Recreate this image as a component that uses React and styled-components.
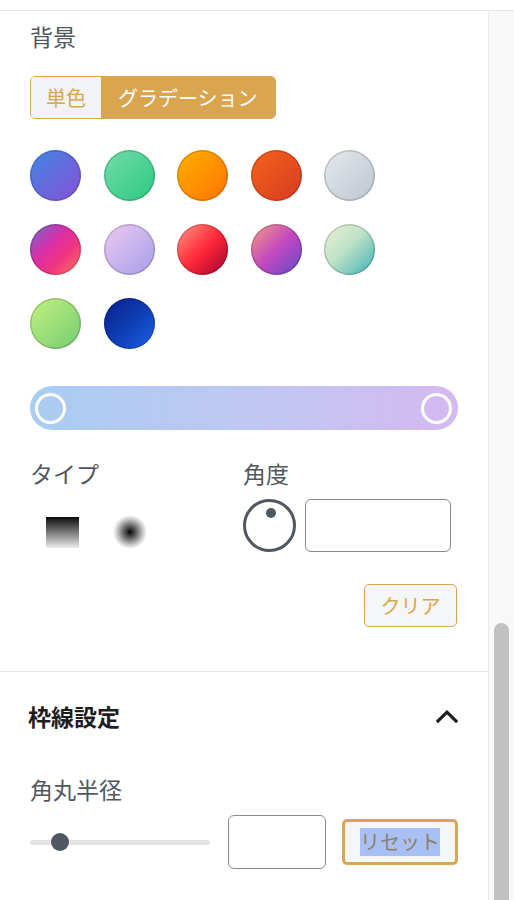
import React from "react";
import styled, { createGlobalStyle } from "styled-components";

const GOLD = "#d9a54f";
const LABEL = "#50575e";
const FONT = `"Noto Sans CJK JP", "Noto Sans", sans-serif`;

const Global = createGlobalStyle`
  html, body { margin: 0; padding: 0; background: #fff; }
  body { font-family: ${FONT}; }
  * { box-sizing: border-box; }
`;

const Page = styled.div`
  width: 514px;
  height: 900px;
  overflow: hidden;
  display: flex;
  flex-direction: column;
`;

const TopSpace = styled.div`
  height: 11px;
  flex: none;
  border-bottom: 1.5px solid #e4e5e7;
`;

const Body = styled.div`
  flex: 1;
  display: flex;
  min-height: 0;
`;

const Panel = styled.div`
  flex: 1;
  display: flex;
  flex-direction: column;
`;

const Gutter = styled.div`
  width: 27px;
  flex: none;
  background: #f8f8f8;
  border-left: 1px solid #e9e9e9;
  padding-top: 612px;
  padding-left: 5px;
`;

const Thumb = styled.div`
  width: 15px;
  height: 400px;
  border-radius: 8px;
  background: #c1c1c1;
`;

const Section = styled.div`
  padding: ${(p) => p.$pad || "0 30px"};
  display: flex;
  flex-direction: column;
  border-bottom: ${(p) => (p.$divider ? "1.5px solid #e4e5e7" : "none")};
`;

const Label = styled.div`
  font-size: 23px;
  line-height: 32px;
  color: ${LABEL};
  margin-top: ${(p) => p.$mt || 0}px;
`;

const Toggle = styled.div`
  margin-top: 24px;
  display: inline-flex;
  align-self: flex-start;
  height: 43px;
  border: 1.5px solid ${GOLD};
  border-radius: 5px;
  overflow: hidden;
`;

const Seg = styled.div`
  display: flex;
  align-items: center;
  padding: 0 ${(p) => p.$px}px;
  font-size: 20px;
  background: ${(p) => (p.$active ? GOLD : "#f2f3f5")};
  color: ${(p) => (p.$active ? "#fff" : GOLD)};
`;

const Swatches = styled.div`
  margin-top: 31px;
  display: grid;
  grid-template-columns: repeat(5, 51px);
  column-gap: 22.5px;
  row-gap: 23px;
`;

const Swatch = styled.div`
  width: 51px;
  height: 51px;
  border-radius: 50%;
  background: ${(p) => p.$bg};
  box-shadow: inset 0 0 0 1.5px rgba(0, 0, 0, 0.16);
`;

const GradBar = styled.div`
  margin-top: 37px;
  height: 44px;
  border-radius: 22px;
  background: linear-gradient(90deg, #a9ccf3 0%, #bfc8f1 50%, #d5b9f2 100%);
  display: flex;
  align-items: center;
  justify-content: space-between;
  padding: 0 6px 0 5px;
`;

const Handle = styled.div`
  width: 31px;
  height: 31px;
  border-radius: 50%;
  border: 3px solid #fff;
`;

const Columns = styled.div`
  margin-top: 27px;
  display: grid;
  grid-template-columns: 213px 1fr;
`;

const Col = styled.div`
  display: flex;
  flex-direction: column;
`;

const Row = styled.div`
  display: flex;
  align-items: center;
  gap: ${(p) => p.$gap || 0}px;
  margin-top: ${(p) => p.$mt || 0}px;
  padding-top: ${(p) => p.$pt || 0}px;
  padding-left: ${(p) => p.$pl || 0}px;
  height: ${(p) => (p.$h ? p.$h + "px" : "auto")};
`;

const LinearIcon = styled.div`
  width: 33px;
  height: 31px;
  background: linear-gradient(180deg, #0a0a0a 0%, #5a5a5a 35%, #a8a8a8 70%, #ececec 100%);
`;

const RadialIcon = styled.div`
  width: 34px;
  height: 34px;
  border-radius: 50%;
  background: radial-gradient(circle closest-side, #000 0%, #333 18%, #777 45%, #bdbdbd 72%, rgba(255,255,255,0) 100%);
`;

const Dial = styled.div`
  width: 53px;
  height: 53px;
  border-radius: 50%;
  border: 3px solid ${LABEL};
  display: flex;
  justify-content: center;
  padding-top: 6px;
  padding-left: 2px;
  flex: none;
`;

const Dot = styled.div`
  width: 10px;
  height: 10px;
  border-radius: 50%;
  background: ${LABEL};
`;

const Input = styled.div`
  width: ${(p) => p.$w}px;
  height: ${(p) => p.$h}px;
  border: 1.5px solid #868a8f;
  border-radius: 6px;
  background: #fff;
  flex: none;
`;

const ButtonRow = styled.div`
  display: flex;
  justify-content: flex-end;
  margin-top: 32px;
  margin-bottom: 44px;
  padding-right: 1px;
`;

const GoldButton = styled.div`
  height: ${(p) => p.$h}px;
  width: ${(p) => p.$w}px;
  display: flex;
  align-items: center;
  justify-content: center;
  font-size: 20px;
  color: ${GOLD};
  background: #f5f6f8;
  border: ${(p) => (p.$focus ? "3px" : "1.5px")} solid ${GOLD};
  border-radius: 5px;
  flex: none;
`;

const Selected = styled.span`
  background: #a9c0f4;
  color: #8e7e69;
  line-height: 28px;
`;

const Header = styled.div`
  display: flex;
  align-items: center;
  justify-content: space-between;
  margin-top: 28px;
`;

const Title = styled.div`
  font-size: 23px;
  line-height: 32px;
  font-weight: 700;
  color: #1e1e1e;
  margin-left: -2px;
`;

const Track = styled.div`
  width: 180px;
  height: 5px;
  border-radius: 3px;
  background: #e3e3e5;
  display: flex;
  align-items: center;
  padding-left: 21px;
  flex: none;
`;

const SliderThumb = styled.div`
  width: 18px;
  height: 18px;
  border-radius: 50%;
  background: ${LABEL};
  flex: none;
`;

const swatches = [
  "linear-gradient(135deg, #3f86e6 0%, #8a50d6 100%)",
  "linear-gradient(135deg, #72dca8 0%, #2ec882 100%)",
  "linear-gradient(135deg, #ffb000 0%, #ff7400 100%)",
  "linear-gradient(135deg, #f5621a 0%, #d63c24 100%)",
  "linear-gradient(135deg, #e6e9ee 0%, #bcc5cf 100%)",
  "linear-gradient(135deg, #6a6ed0 0%, #d92ea8 40%, #f0357e 65%, #ff7a5c 100%)",
  "linear-gradient(135deg, #ecc8f0 0%, #c9b4ee 50%, #a59ee6 100%)",
  "linear-gradient(135deg, #ff9a86 0%, #ff2a3a 50%, #a3002e 100%)",
  "linear-gradient(135deg, #f0a080 0%, #c448c0 50%, #5e4ac8 100%)",
  "linear-gradient(135deg, #eaf0d0 0%, #bfe3c8 45%, #3cb0b4 100%)",
  "linear-gradient(135deg, #c2f27e 0%, #74cc72 100%)",
  "linear-gradient(135deg, #0a1f88 0%, #0f3fb8 55%, #1e64ec 100%)",
];

function Chevron() {
  return (
    <svg width="22" height="14" viewBox="0 0 22 14" fill="none">
      <path d="M2 12 L11 3.2 L20 12" stroke="#1e1e1e" strokeWidth="3.2" strokeLinecap="square" />
    </svg>
  );
}

export default function App() {
  return (
    <Page>
      <Global />
      <TopSpace />
      <Body>
        <Panel>
          <Section $divider $pad="0 30px 0 30px">
            <Label $mt={9}>背景</Label>
            <Toggle>
              <Seg $px={15}>単色</Seg>
              <Seg $px={17} $active>グラデーション</Seg>
            </Toggle>
            <Swatches>
              {swatches.map((bg, i) => (
                <Swatch key={i} $bg={bg} />
              ))}
            </Swatches>
            <GradBar>
              <Handle />
              <Handle />
            </GradBar>
            <Columns>
              <Col>
                <Label>タイプ</Label>
                <Row $mt={10} $h={53} $pt={13} $pl={16} $gap={34}>
                  <LinearIcon />
                  <RadialIcon />
                </Row>
              </Col>
              <Col>
                <Label>角度</Label>
                <Row $mt={10} $gap={9}>
                  <Dial>
                    <Dot />
                  </Dial>
                  <Input $w={146} $h={53} />
                </Row>
              </Col>
            </Columns>
            <ButtonRow>
              <GoldButton $w={93} $h={43}>クリア</GoldButton>
            </ButtonRow>
          </Section>
          <Section>
            <Header>
              <Title>枠線設定</Title>
              <Chevron />
            </Header>
            <Label $mt={41}>角丸半径</Label>
            <Row $mt={10}>
              <Track>
                <SliderThumb />
              </Track>
              <Row $pl={18} $gap={16}>
                <Input $w={98} $h={54} />
                <GoldButton $focus $w={116} $h={46}>
                  <Selected>リセット</Selected>
                </GoldButton>
              </Row>
            </Row>
          </Section>
        </Panel>
        <Gutter>
          <Thumb />
        </Gutter>
      </Body>
    </Page>
  );
}
